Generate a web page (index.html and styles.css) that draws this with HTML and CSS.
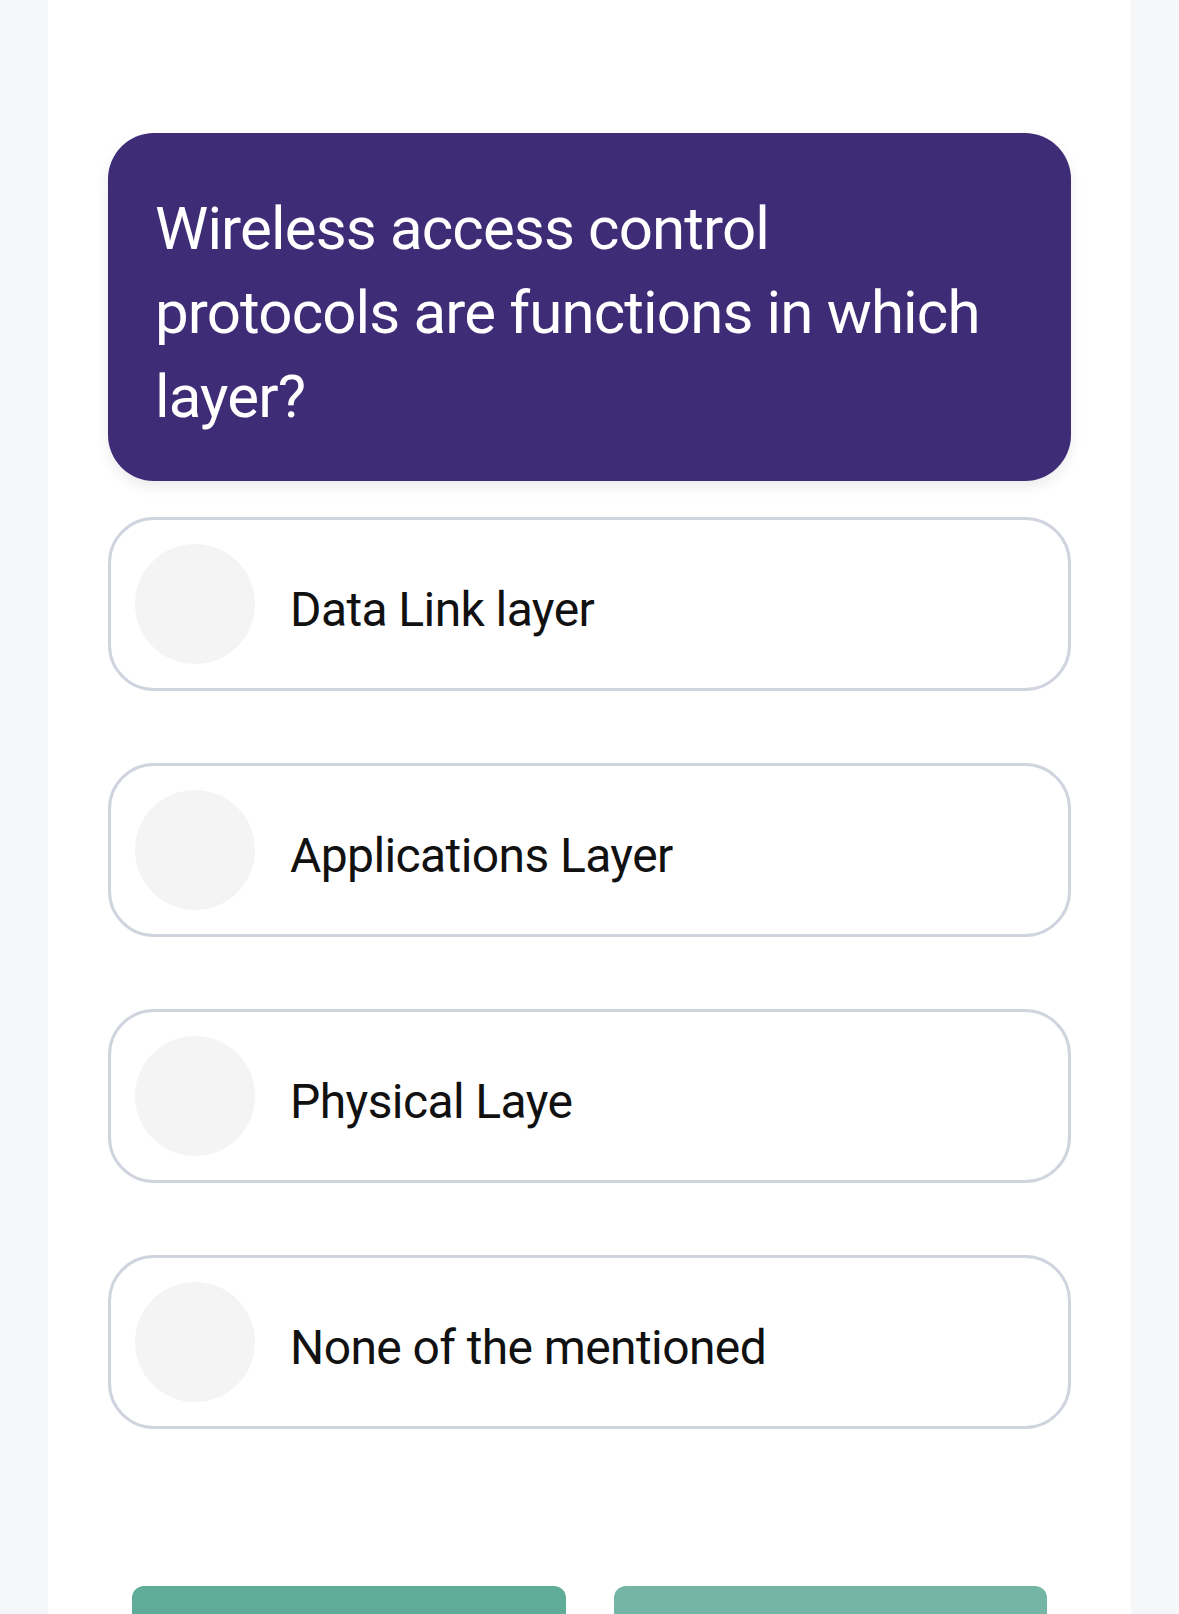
FILE: index.html
```html
<!DOCTYPE html>
<html lang="en">
<head>
    <meta charset="UTF-8">
    <meta name="viewport" content="width=device-width, initial-scale=1.0">
    <title>Quiz - Question</title>
    <link rel="stylesheet" href="styles.css">
</head>

<body>
    <div class="quiz">
        <div class="question">
            <p>Wireless access control protocols are functions in which layer?</p>
        </div>

        <ul class="options">
            <li class="option"><span class="option-mark"></span><span class="option-text">Data Link layer</span></li>
            <li class="option"><span class="option-mark"></span><span class="option-text">Applications Layer</span></li>
            <li class="option"><span class="option-mark"></span><span class="option-text">Physical Laye</span></li>
            <li class="option"><span class="option-mark"></span><span class="option-text">None of the mentioned</span></li>
        </ul>

        <div class="actions">
            <button class="btn btn-prev" type="button" aria-label="Previous question"></button>
            <button class="btn btn-next" type="button" aria-label="Next question"></button>
        </div>
    </div>
</body>
</html>
```

FILE: styles.css
```css
/* General Styles */
body {
    font-family: 'Roboto', 'Noto Sans', sans-serif;
    margin: 0;
    padding: 0;
    background-color: #f6f7f9;
}

.quiz {
    background-color: #fff;
    margin: 0 48px;
    padding: 133px 60px 0;
    min-height: 1700px;
}

/* Question card */
.question {
    background-color: #3e2c77;
    border-radius: 46px;
    box-shadow: 0 6px 14px rgba(0, 0, 0, 0.08);
    padding: 54px 47px 42px;
    color: #fff;
}

.question p {
    margin: 0;
    font-size: 60px;
    line-height: 84px;
    letter-spacing: -0.85px;
}

/* Answer options */
.options {
    list-style: none;
    margin: 36px 0 0;
    padding: 0;
    display: flex;
    flex-direction: column;
    gap: 72px;
}

.option {
    display: flex;
    align-items: center;
    gap: 35px;
    padding: 24px;
    border: 3px solid #d0d4de;
    border-radius: 46px;
    cursor: pointer;
}

.option-mark {
    flex: none;
    width: 120px;
    height: 120px;
    border-radius: 50%;
    background-color: #f4f4f4;
}

.option-text {
    padding-top: 10px;
    font-size: 48px;
    color: #111;
    letter-spacing: -0.6px;
}

/* Bottom buttons */
.actions {
    display: flex;
    gap: 48px;
    margin-top: 157px;
    padding: 0 24px;
}

.btn {
    flex: 1;
    height: 150px;
    border: none;
    border-radius: 12px;
    cursor: pointer;
}

.btn-prev {
    background-color: #5fac98;
}

.btn-next {
    background-color: #75b5a6;
}
```
